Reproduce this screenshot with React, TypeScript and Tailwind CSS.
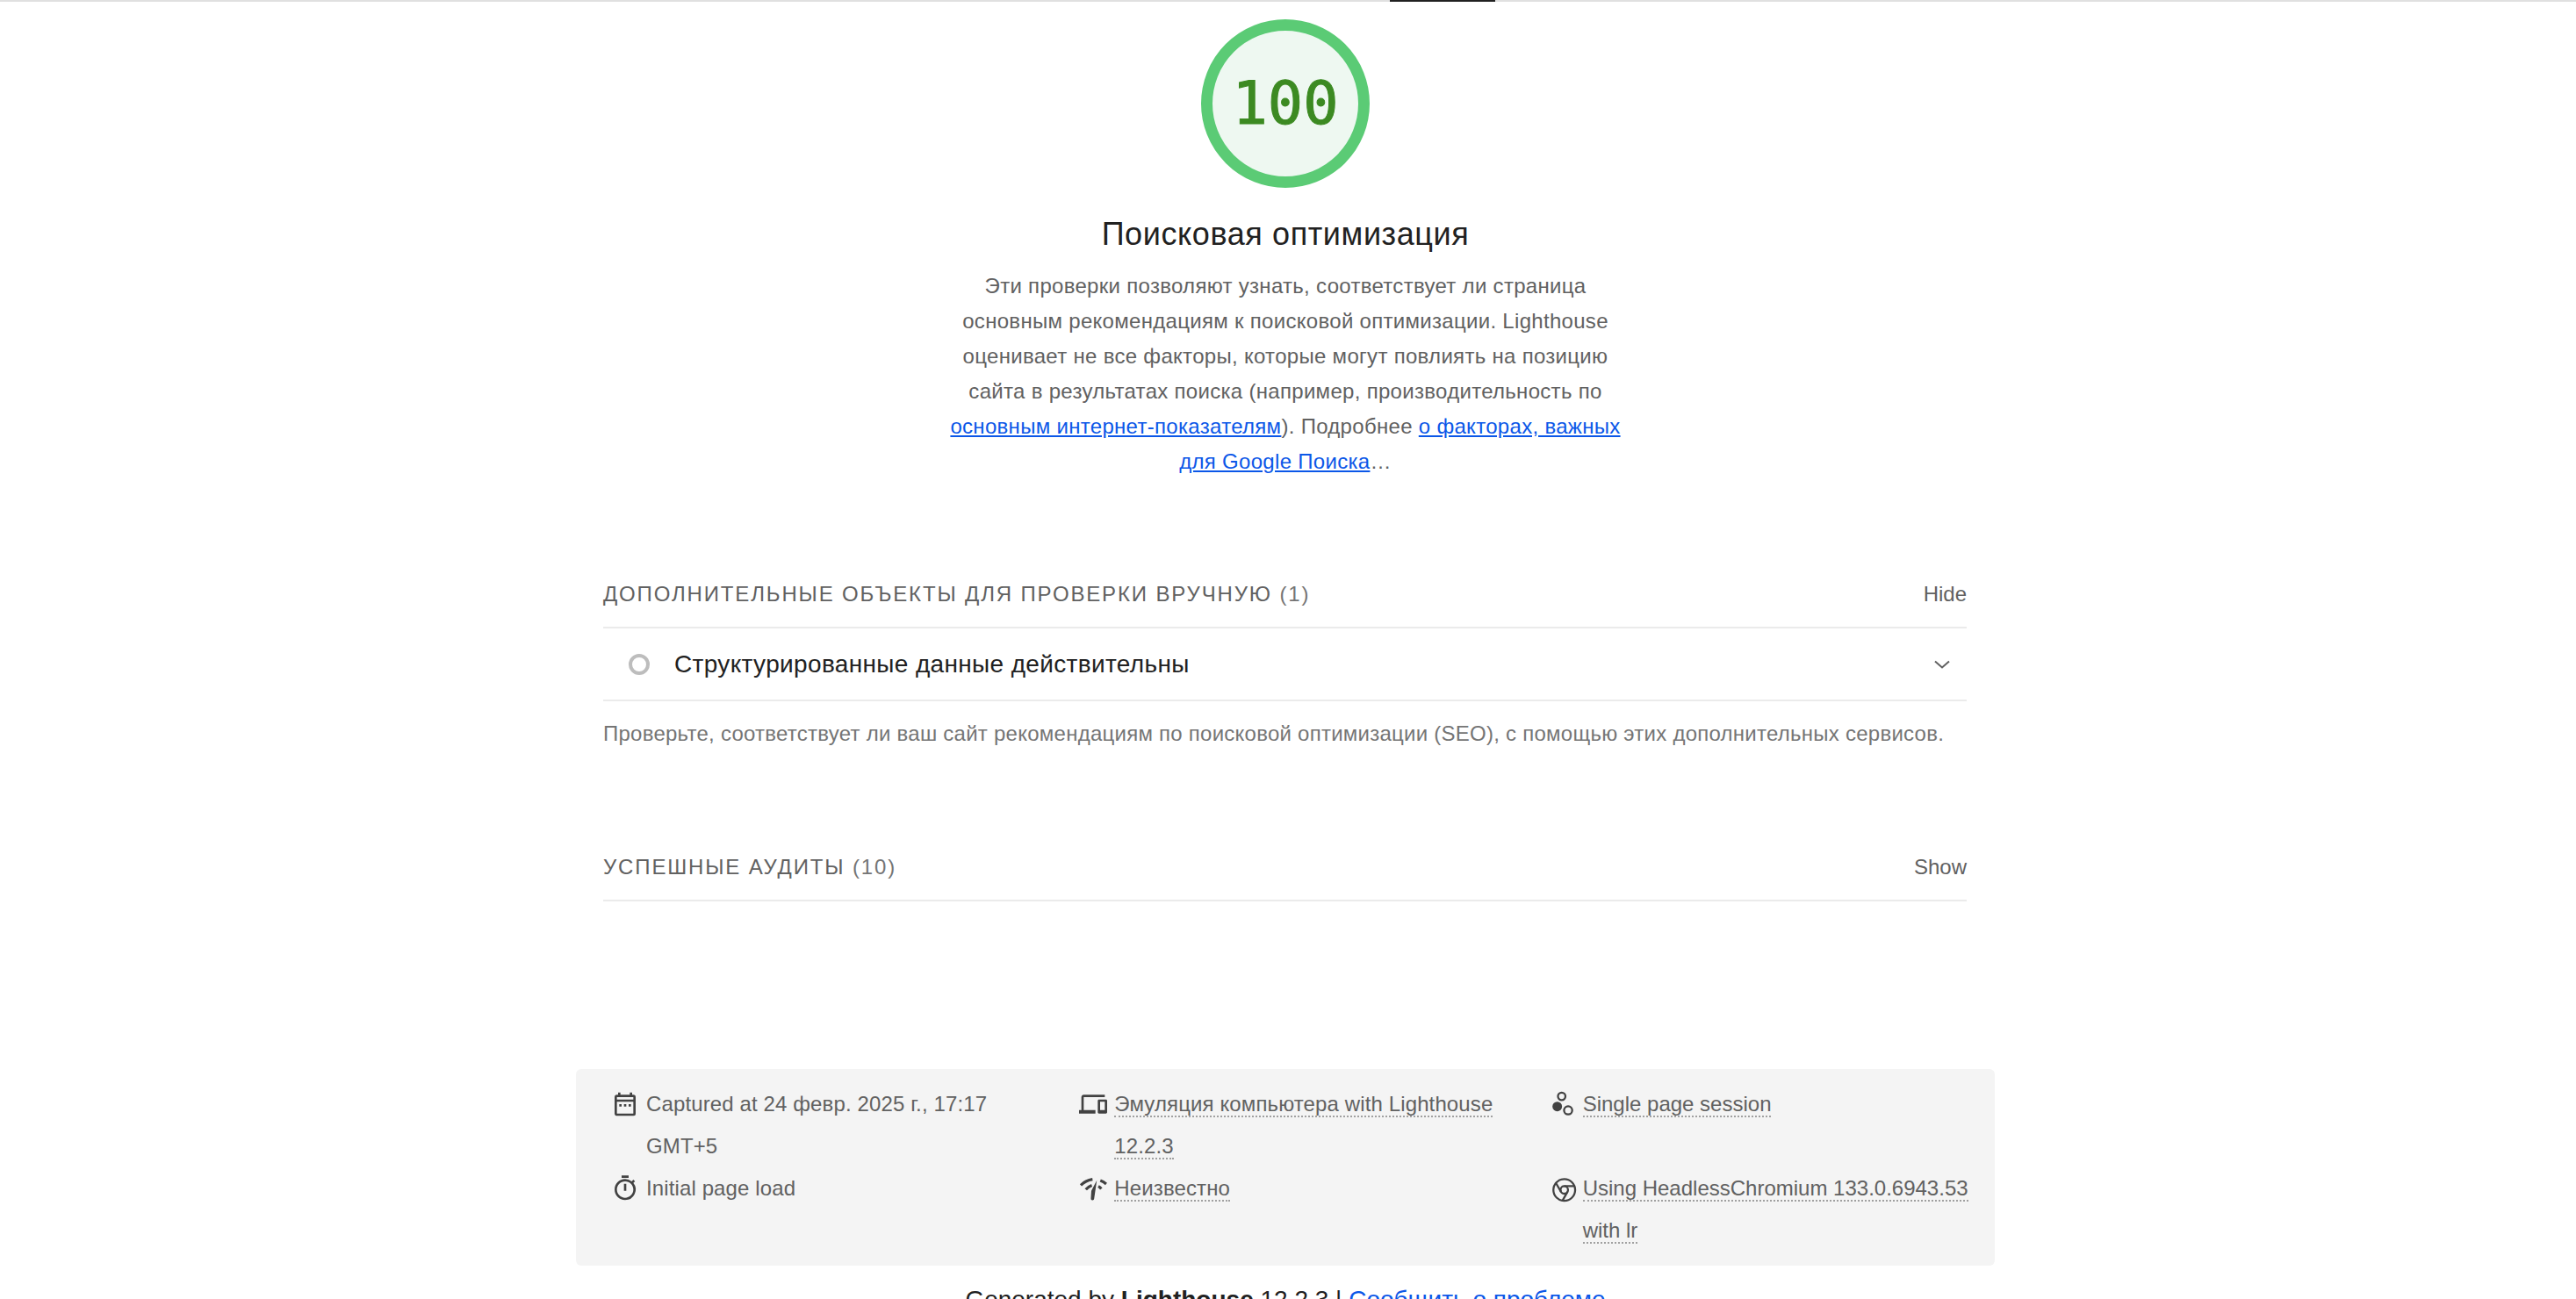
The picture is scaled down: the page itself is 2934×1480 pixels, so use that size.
const sans = "font-['Liberation_Sans',Arial,sans-serif]";

function Icon({ children }: { children: React.ReactNode }) {
  return (
    <span className="w-12 h-12 shrink-0 flex items-center justify-center">
      <svg viewBox="0 0 24 24" className="w-8 h-8 text-[#424242] overflow-visible" fill="currentColor">
        {children}
      </svg>
    </span>
  );
}

function Tip({ children }: { children: React.ReactNode }) {
  return <span className="border-b-2 border-dotted border-[#a0a0a0]">{children}</span>;
}

function MetaItem({ icon, children }: { icon: React.ReactNode; children: React.ReactNode }) {
  return (
    <li className="flex items-start text-[24px] leading-[48px] tracking-[0.12px] text-[#616161]">
      <Icon>{icon}</Icon>
      <div>{children}</div>
    </li>
  );
}

function SectionHeader({ title, count, action }: { title: string; count: number; action: string }) {
  return (
    <div className="flex items-center justify-between h-[76px] border-b-2 border-[#ebebeb] text-[#616161]">
      <div className="text-[24px] tracking-[1.85px] uppercase">
        {title} <span className="text-[#757575]">({count})</span>
      </div>
      <div className="text-[24px]">{action}</div>
    </div>
  );
}

export default function App() {
  return (
    <div className={`${sans} h-[1480px] overflow-hidden bg-white relative`}>
      <div className="h-[2px] bg-[#e0e0e0] flex justify-start">
        <div className="ml-[1583px] w-[120px] bg-[#212121]" />
      </div>

      <div className="flex flex-col items-center pt-5 pr-[6px]">
        <div className="w-[192px] h-[192px] rounded-full border-[13px] border-[#5bcb75] bg-[#eef8f1] flex items-center justify-center">
          <span className="font-['DejaVu_Sans_Mono',monospace] slashed-zero text-[67px] leading-none text-[#3c8a22] [-webkit-text-stroke:1px_#3c8a22]">100</span>
        </div>
        <h1 className="mt-[28px] text-[36px] leading-[50px] tracking-[0.6px] text-[#212121]">Поисковая оптимизация</h1>
        <p className="mt-[14px] text-center text-[24px] leading-[40px] tracking-[0.3px] text-[#616161]">
          Эти проверки позволяют узнать, соответствует ли страница
          <br />
          основным рекомендациям к поисковой оптимизации. Lighthouse
          <br />
          оценивает не все факторы, которые могут повлиять на позицию
          <br />
          сайта в результатах поиска (например, производительность по
          <br />
          <a className="text-[#0b57e8] underline">основным интернет-показателям</a>). Подробнее{" "}
          <a className="text-[#0b57e8] underline">о факторах, важных</a>
          <br />
          <a className="text-[#0b57e8] underline">для Google Поиска</a>…
        </p>
      </div>

      <div className="ml-[687px] w-[1553px] mt-[94px]">
        <SectionHeader title="Дополнительные объекты для проверки вручную" count={1} action="Hide" />
        <div className="flex items-center h-[83px] border-b-2 border-[#ebebeb] pl-[29px] pr-[16px]">
          <span className="w-6 h-6 rounded-full border-[4px] border-[#bdbdbd]" />
          <span className="ml-[28px] text-[28px] tracking-[0.35px] text-[#212121]">Структурированные данные действительны</span>
          <svg viewBox="0 0 24 24" className="ml-auto w-6 h-6" fill="none" stroke="#616161" strokeWidth="2">
            <path d="M4 8.5l8 7 8-7" />
          </svg>
        </div>
        <p className="mt-[17px] text-[24px] leading-[40px] tracking-[0.25px] text-[#757575]">
          Проверьте, соответствует ли ваш сайт рекомендациям по поисковой оптимизации (SEO), с помощью этих дополнительных сервисов.
        </p>
        <div className="mt-[95px]">
          <SectionHeader title="Успешные аудиты" count={10} action="Show" />
        </div>
      </div>

      <ul className="ml-[656px] mt-[191px] w-[1616px] h-[224px] rounded-md bg-[#f4f4f4] pl-8 py-4 grid grid-cols-3 gap-x-4 content-start">
        <MetaItem
          icon={
            <path d="M19 4h-1V2h-2v2H8V2H6v2H5a2 2 0 0 0-2 2v14c0 1.1.9 2 2 2h14a2 2 0 0 0 2-2V6a2 2 0 0 0-2-2zm0 16H5V10h14v10zm0-12H5V6h14v2zM7 12h2v2H7zm4 0h2v2h-2zm4 0h2v2h-2z" />
          }
        >
          Captured at 24 февр. 2025 г., 17:17 GMT+5
        </MetaItem>
        <MetaItem
          icon={
            <path d="M4 6h18V4H4c-1.1 0-2 .9-2 2v11H0v3h14v-3H4V6zm19 2h-6c-.55 0-1 .45-1 1v10c0 .55.45 1 1 1h6c.55 0 1-.45 1-1V9c0-.55-.45-1-1-1zm-1 9h-4v-7h4v7z" />
          }
        >
          <Tip>Эмуляция компьютера with Lighthouse 12.2.3</Tip>
        </MetaItem>
        <MetaItem
          icon={
            <>
              <circle cx="8" cy="14" r="4.1" />
              <circle cx="11.8" cy="5.3" r="3.2" fill="none" stroke="currentColor" strokeWidth="1.7" />
              <circle cx="17.3" cy="17.3" r="3.5" fill="none" stroke="currentColor" strokeWidth="1.7" />
            </>
          }
        >
          <span className="tracking-normal">
            <Tip>Single page session</Tip>
          </span>
        </MetaItem>
        <MetaItem
          icon={
            <path d="M15 1H9v2h6V1zm-4 13h2V8h-2v6zm8.03-6.61l1.42-1.42c-.43-.51-.9-.99-1.41-1.41l-1.42 1.42A8.962 8.962 0 0 0 12 4c-4.97 0-9 4.03-9 9s4.02 9 9 9a8.994 8.994 0 0 0 7.03-14.61zM12 20c-3.87 0-7-3.13-7-7s3.13-7 7-7 7 3.13 7 7-3.13 7-7 7z" />
          }
        >
          Initial page load
        </MetaItem>
        <MetaItem
          icon={
            <>
              <g fill="none" stroke="currentColor" strokeWidth="2.4">
                <path d="M1.500 9.200C4.200 6.500 7.700 4.800 11.500 4.200" />
                <path d="M5.800 13C7.200 11.300 8.900 10 10.900 9.300" />
                <path d="M18.200 5.300C20 6 21.700 7 23.200 8.300" />
                <path d="M16.500 10.200C17.500 10.700 18.300 11.400 19 12.300" />
              </g>
              <path d="M15.200 5L12.900 20.900a1.400 1.400 0 0 1-2.800-.3L10.500 14z" />
            </>
          }
        >
          <Tip>Неизвестно</Tip>
        </MetaItem>
        <MetaItem
          icon={
            <g fill="none" stroke="currentColor" strokeWidth="1.7">
              <circle cx="14" cy="13.300" r="9.300" />
              <circle cx="14" cy="13.300" r="3.200" />
              <path d="M14 10.100H22.500M11.230 14.900L6.600 6.900M16.770 14.900L12.500 22.400" />
            </g>
          }
        >
          <span className="tracking-normal">
            <Tip>Using HeadlessChromium 133.0.6943.53 with lr</Tip>
          </span>
        </MetaItem>
      </ul>

      <div className="mt-[21px] pr-[6px] text-center text-[28px] leading-[36px] text-[#212121]">
        Generated by <b>Lighthouse</b> 12.2.3 | <a className="text-[#0b57e8] underline">Сообщить о проблеме</a>
      </div>
    </div>
  );
}
